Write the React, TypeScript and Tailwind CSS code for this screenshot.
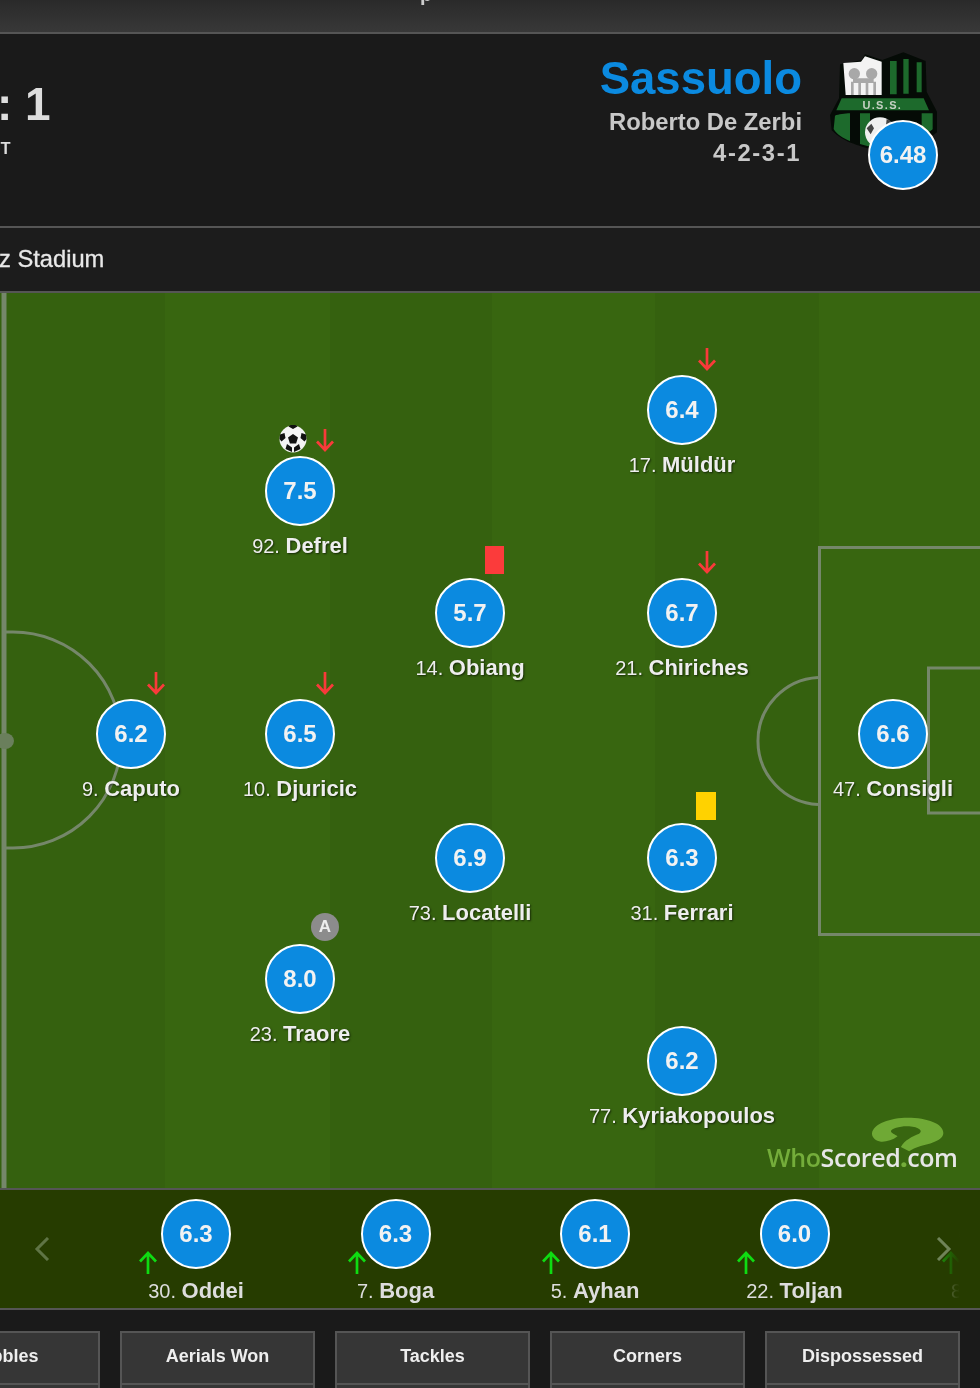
import React from 'react';

type Player = {
  x: number;
  y: number;
  rating: string;
  num: string;
  name: string;
  down?: boolean;
  goal?: boolean;
  card?: 'red' | 'yellow';
  captain?: boolean;
};

// x / y are the middle of the rating circle, measured from the pitch corner
const starters: Player[] = [
  { x: 682, y: 117, rating: '6.4', num: '17.', name: 'Müldür', down: true },
  { x: 300, y: 198, rating: '7.5', num: '92.', name: 'Defrel', down: true, goal: true },
  { x: 470, y: 320, rating: '5.7', num: '14.', name: 'Obiang', card: 'red' },
  { x: 682, y: 320, rating: '6.7', num: '21.', name: 'Chiriches', down: true },
  { x: 131, y: 441, rating: '6.2', num: '9.', name: 'Caputo', down: true },
  { x: 300, y: 441, rating: '6.5', num: '10.', name: 'Djuricic', down: true },
  { x: 893, y: 441, rating: '6.6', num: '47.', name: 'Consigli' },
  { x: 470, y: 565, rating: '6.9', num: '73.', name: 'Locatelli' },
  { x: 682, y: 565, rating: '6.3', num: '31.', name: 'Ferrari', card: 'yellow' },
  { x: 300, y: 686, rating: '8.0', num: '23.', name: 'Traore', captain: true },
  { x: 682, y: 768, rating: '6.2', num: '77.', name: 'Kyriakopoulos' },
];

const subs = [
  { rating: '6.3', num: '30.', name: 'Oddei' },
  { rating: '6.3', num: '7.', name: 'Boga' },
  { rating: '6.1', num: '5.', name: 'Ayhan' },
  { rating: '6.0', num: '22.', name: 'Toljan' },
];

const stats = ['Dribbles', 'Aerials Won', 'Tackles', 'Corners', 'Dispossessed'];

const ArrowDown = () => (
  <svg width="20" height="24" viewBox="0 0 20 24" fill="none" stroke="#f93a3a" strokeWidth="2.7">
    <path d="M10 1v21M2 13.5l8 8.5 8-8.5" />
  </svg>
);

const ArrowUp = () => (
  <svg width="20" height="24" viewBox="0 0 20 24" fill="none" stroke="#0fdc12" strokeWidth="2.7">
    <path d="M10 23V2M2 10.5L10 2l8 8.5" />
  </svg>
);

const Ball = () => (
  <svg width="28" height="28" viewBox="0 0 28 28">
    <circle cx="14" cy="14" r="13.5" fill="#f4f4f4" />
    <path d="M14 9l5 3.6-1.900 5.900h-6.200L9 12.600z" fill="#111" />
    <path d="M9.500 1.500L14 4l4.500-2.500-2-1.500h-5zM1 9.500l4.500-1.500 1 5-4 3.500-2-2.500zM27 9.500L22.500 8l-1 5 4 3.500 2-2.500zM6.500 24l1.500-5 5 3.500V27zM21.500 24L20 19l-5 3.500V27z" fill="#111" />
  </svg>
);

const Rating = ({ value }: { value?: string }) => (
  <div className="flex h-[70px] w-[70px] items-center justify-center rounded-full border-2 border-white bg-[#0b8ae0] text-[24px] font-bold text-[#f2f2f2]">
    {value}
  </div>
);

const Label = ({ num, name }: { num: string; name?: string }) => (
  <>
    <span className="text-[20px] font-normal">{num} </span>
    {name}
  </>
);

const PlayerNode = ({ p }: { p: Player }) => (
  <div
    className="absolute flex w-[200px] -translate-x-1/2 flex-col items-center"
    style={{ left: p.x, top: p.y - 35 }}
  >
    <Rating value={p.rating} />
    <div className="mt-[7px] whitespace-nowrap text-[22px] leading-[26px] font-bold text-[#eeeeee] [text-shadow:1px_1px_2px_rgba(0,0,0,0.6)]">
      <Label num={p.num} name={p.name} />
    </div>
    {p.down && (
      <div className="absolute top-[-28px] left-[115px]">
        <ArrowDown />
      </div>
    )}
    {p.goal && (
      <div className="absolute top-[-31px] left-[79px]">
        <Ball />
      </div>
    )}
    {p.card === 'red' && <div className="absolute top-[-32px] left-[115px] h-[28px] w-[19px] bg-[#fb3b3b]" />}
    {p.card === 'yellow' && <div className="absolute top-[-31px] left-[114px] h-[28px] w-[20px] bg-[#ffd200]" />}
    {p.captain && (
      <div className="absolute top-[-31px] left-[111px] flex h-[28px] w-[28px] items-center justify-center rounded-full bg-[#8c8c8c] text-[17px] font-bold text-[#eeeeee]">
        A
      </div>
    )}
  </div>
);

const SubNode = ({ rating, num, name, width }: { rating?: string; num: string; name?: string; width?: string }) => (
  <div className="flex w-[199.5px] shrink-0 flex-col items-center">
    <Rating value={rating} />
    <div className={`relative mt-[9px] whitespace-nowrap text-[22px] leading-[26px] font-bold text-[#dddddd] ${width ?? ''}`}>
      <div className="absolute top-[-27px] left-[-10px]">
        <ArrowUp />
      </div>
      <Label num={num} name={name} />
    </div>
  </div>
);

const PitchLines = () => (
  <svg className="absolute inset-0" width="980" height="895" viewBox="0 0 980 895" fill="none" stroke="#75876a" strokeWidth="3">
    <path d="M4 0v895" strokeWidth="5" />
    <ellipse cx="5" cy="448" rx="9" ry="8" fill="#6a7f5c" stroke="none" />
    <path d="M3 339H13A108 108 0 0 1 13 555H3" />
    <path d="M980 254.500H819.500V641.500H980" />
    <path d="M980 375H928.500V520H980" />
    <path d="M818 384.500A63.600 63.600 0 0 0 818 511.500" />
  </svg>
);

const WhoScored = () => (
  <div className="absolute top-[824px] left-[767px] h-[56px] w-[196px]">
    <svg className="absolute top-0 left-[104px]" width="73" height="35" viewBox="390 50 220 105" fill="#6fa935">
      <path d="M393 100C395 70 450 52 500 52C560 52 608 70 608 98C608 120 570 130 540 137C525 141 512 148 505 153L480 140C490 120 515 108 535 100C548 92 535 80 505 78C480 76 452 85 450 92C450 98 462 102 470 108C455 120 435 125 420 124C405 122 393 112 393 100Z" />
    </svg>
    <div className="absolute bottom-[1px] left-0 whitespace-nowrap font-['Open_Sans',sans-serif] text-[25px] leading-[30px] font-semibold tracking-[-0.4px] text-[#e6e6e6]">
      <span className="text-[#74ad3a]">Who</span>Scored<span className="font-extrabold text-[#74ad3a]">.</span>com
    </div>
  </div>
);

// drawn on a 3x grid so the numbers line up with the badge
const Crest = () => (
  <svg className="absolute top-[-8px] left-[-5px]" width="120" height="120" viewBox="0 0 360 360">
    <path d="M45 58L110 45 120 28 172 45 190 38 235 22 302 48 305 140 336 200 336 262C300 292 250 296 175 325 100 300 60 296 20 256L15 210 42 160z" fill="#050b06" />
    <path d="M195 48h20v100h-20zM235 42h16v104h-16zM275 52h15v90h-15z" fill="#1d6a2c" />
    <path d="M55 54L108 50 120 34 170 50V150H62z" fill="#f3f3f3" />
    <circle cx="88" cy="86" r="17" fill="#a8a8a8" />
    <circle cx="140" cy="86" r="17" fill="#a8a8a8" />
    <path d="M78 150V110h8v40zM100 150v-40h8v40zM122 150v-40h8v40zM145 150v-40h8v40zM84 100h62v14H84z" fill="#a8a8a8" />
    <path d="M50 160H296L312 196H34z" fill="#1d6a2c" />
    <text x="172" y="192" textAnchor="middle" fontFamily="Liberation Sans, sans-serif" fontWeight="700" fontSize="33" letterSpacing="4" fill="#c6d2c4">U.S.S.</text>
    <path d="M30 212C40 208 60 205 75 205V288C55 280 35 268 26 252zM105 205h30v100l-30-8zM290 205h33v48l-33 25z" fill="#1d6a2c" />
    <circle cx="165" cy="262" r="45" fill="#efefef" />
    <path d="M125 250l14-14 8 14-10 18zM185 222l18 10-6 14-14-6z" fill="#444" />
  </svg>
);

export default function App() {
  return (
    <div className="relative flex h-[1388px] w-[980px] flex-col overflow-hidden bg-[#1a1a1a] font-['Liberation_Sans',Arial,sans-serif] blur-[0.6px]">
      {/* top bar, only the bottom of it is in view */}
      <div className="h-[32px] shrink-0 overflow-hidden bg-gradient-to-b from-[#2a2a2a] to-[#383838]">
        <div className="mt-[-19px] pl-[420px] text-[20px] leading-[26px] font-bold text-[#cccccc]">p</div>
      </div>

      {/* match header */}
      <div className="flex h-[196px] shrink-0 items-start justify-between overflow-hidden border-y-2 border-y-[#555555] bg-[#1a1a1a]">
        <div className="ml-[-3px] pt-[43px] text-[#dddddd]">
          <div className="text-[46px] leading-[54px] font-bold">: 1</div>
          <div className="mt-[9px] ml-[-6px] text-[16px] leading-[18px] font-bold">FT</div>
        </div>
        <div className="flex items-start pt-[19px] pr-[42px]">
          <div className="flex flex-col items-end pt-[1px] pr-[28px]">
            <div className="text-[45.5px] leading-[50px] font-bold text-[#0b8ae0]">Sassuolo</div>
            <div className="mt-[3px] text-[23.8px] leading-[30px] font-bold text-[#c8c8c8]">Roberto De Zerbi</div>
            <div className="mt-[1px] mr-[1px] text-[23.8px] leading-[30px] font-bold tracking-[1.6px] text-[#c8c8c8]">4-2-3-1</div>
          </div>
          <div className="relative h-[102px] w-[108px]">
            <Crest />
            <div className="absolute top-[67px] left-[38px]">
              <Rating value="6.48" />
            </div>
          </div>
        </div>
      </div>

      {/* stadium strip */}
      <div className="flex h-[65px] shrink-0 items-center justify-between border-b-2 border-b-[#555555] bg-[#1c1c1c] text-[23.7px] leading-[28px] text-[#e8e8e8] [-webkit-text-stroke:0.3px_#e8e8e8]">
        <span className="ml-[-1px] pb-[1px]">z Stadium</span>
        <span className="mr-[-8px] text-[#bbbbbb]">-</span>
      </div>

      {/* pitch */}
      <div className="relative h-[895px] shrink-0 overflow-hidden bg-[#37650f]">
        <div className="absolute inset-0 grid grid-cols-[165px_165px_162px_163px_164px_161px]">
          <div className="bg-[#35610f]" />
          <div className="bg-[#386610]" />
          <div className="bg-[#35610f]" />
          <div className="bg-[#386610]" />
          <div className="bg-[#35610f]" />
          <div className="bg-[#386610]" />
        </div>
        <PitchLines />
        {starters.map((p) => (
          <PlayerNode key={p.num} p={p} />
        ))}
        <WhoScored />
      </div>

      {/* substitutes */}
      <div className="relative flex h-[122px] shrink-0 overflow-hidden border-y-2 border-y-[#555555] bg-[#263c00] pt-[9px] pl-[96.25px]">
        {subs.map((s) => (
          <SubNode key={s.num} {...s} />
        ))}
        <SubNode num="8." width="w-[86px]" />
        <div className="absolute inset-y-0 right-0 w-[60px] bg-gradient-to-r from-[#263c0000] to-[#263c00] to-[66%]" />
        <svg className="absolute top-[47px] left-[34px]" width="16" height="24" viewBox="0 0 16 24" fill="none" stroke="#5f7445" strokeWidth="3">
          <path d="M14 1L3 12l11 11" />
        </svg>
        <svg className="absolute top-[47px] left-[936px]" width="16" height="24" viewBox="0 0 16 24" fill="none" stroke="#6f8358" strokeWidth="3">
          <path d="M2 1l11 11L2 23" />
        </svg>
      </div>

      {/* stat tabs, the next row of them starts at the bottom edge */}
      <div className="flex shrink-0 gap-[20px] pt-[21px]">
        {stats.map((s, i) => (
          <div key={s} className={`w-[195px] shrink-0 ${i === 0 ? 'ml-[-95px]' : ''}`}>
            <div className="flex h-[54px] items-center justify-center border-2 border-[#555555] bg-[#363636] pb-[3px] text-[18px] font-bold text-[#eeeeee]">
              {s}
            </div>
            <div className="h-[10px] border-x-2 border-[#555555] bg-[#363636]" />
          </div>
        ))}
      </div>
    </div>
  );
}
